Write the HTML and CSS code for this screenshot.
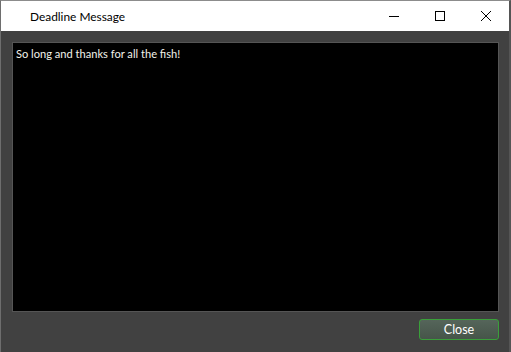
FILE: index.html
```html
<!DOCTYPE html>
<html>
<head>
<meta charset="utf-8">
<title>Deadline Message</title>
<link rel="stylesheet" href="styles.css">
</head>
<body>
<div class="window">
  <div class="titlebar">
    <span class="title">Deadline Message</span>
    <div class="controls">
      <span class="ctl">
        <svg width="10" height="10" viewBox="0 0 10 10"><path d="M0 5.5H10" stroke="#000" stroke-width="1"/></svg>
      </span>
      <span class="ctl">
        <svg width="10" height="10" viewBox="0 0 10 10"><rect x="0.5" y="0.5" width="9" height="9" fill="none" stroke="#000" stroke-width="1"/></svg>
      </span>
      <span class="ctl">
        <svg width="10" height="10" viewBox="0 0 10 10"><path d="M0 0L10 10M10 0L0 10" stroke="#000" stroke-width="1"/></svg>
      </span>
    </div>
  </div>
  <div class="client">
    <div class="message">So long and thanks for all the fish!</div>
    <div class="footer">
      <button class="btn">Close</button>
    </div>
  </div>
</div>
</body>
</html>
```
FILE: styles.css
```css
html, body {
  margin: 0;
  padding: 0;
  background: #404040;
}
.window {
  width: 511px;
  height: 352px;
  box-sizing: border-box;
  border-top: 1px solid #8c8c8c;
  border-left: 1px solid #6e6e6e;
  border-right: 2px solid #555555;
  display: flex;
  flex-direction: column;
  background: #414141;
  font-family: "Lato", "Noto Sans", sans-serif;
}
.titlebar {
  height: 30px;
  background: #ffffff;
  display: flex;
  align-items: center;
  flex-shrink: 0;
}
.title {
  padding-left: 29px;
  font-size: 11.9px;
  color: #000;
  flex: 1;
}
.controls {
  display: flex;
  height: 100%;
}
.ctl {
  width: 46px;
  height: 100%;
  display: flex;
  align-items: center;
  justify-content: center;
}
.ctl svg {
  display: block;
  shape-rendering: crispEdges;
}
.client {
  flex: 1;
  display: flex;
  flex-direction: column;
  padding: 11px 10px 12px 11px;
}
.message {
  flex: 1;
  background: #000;
  border: 1px solid #555555;
  color: #f2f2ea;
  font-size: 11.1px;
  padding: 4px 3px 3px;
  line-height: 14px;
}
.footer {
  display: flex;
  justify-content: flex-end;
  padding-top: 7px;
}
.btn {
  width: 80px;
  height: 21px;
  border: 1px solid #3a9f3a;
  border-radius: 3px;
  background: linear-gradient(#55655a, #465549);
  color: #ffffff;
  font-family: "Lato", "Noto Sans", sans-serif;
  font-size: 12.5px;
  padding: 0;
  line-height: 18px;
}
```
